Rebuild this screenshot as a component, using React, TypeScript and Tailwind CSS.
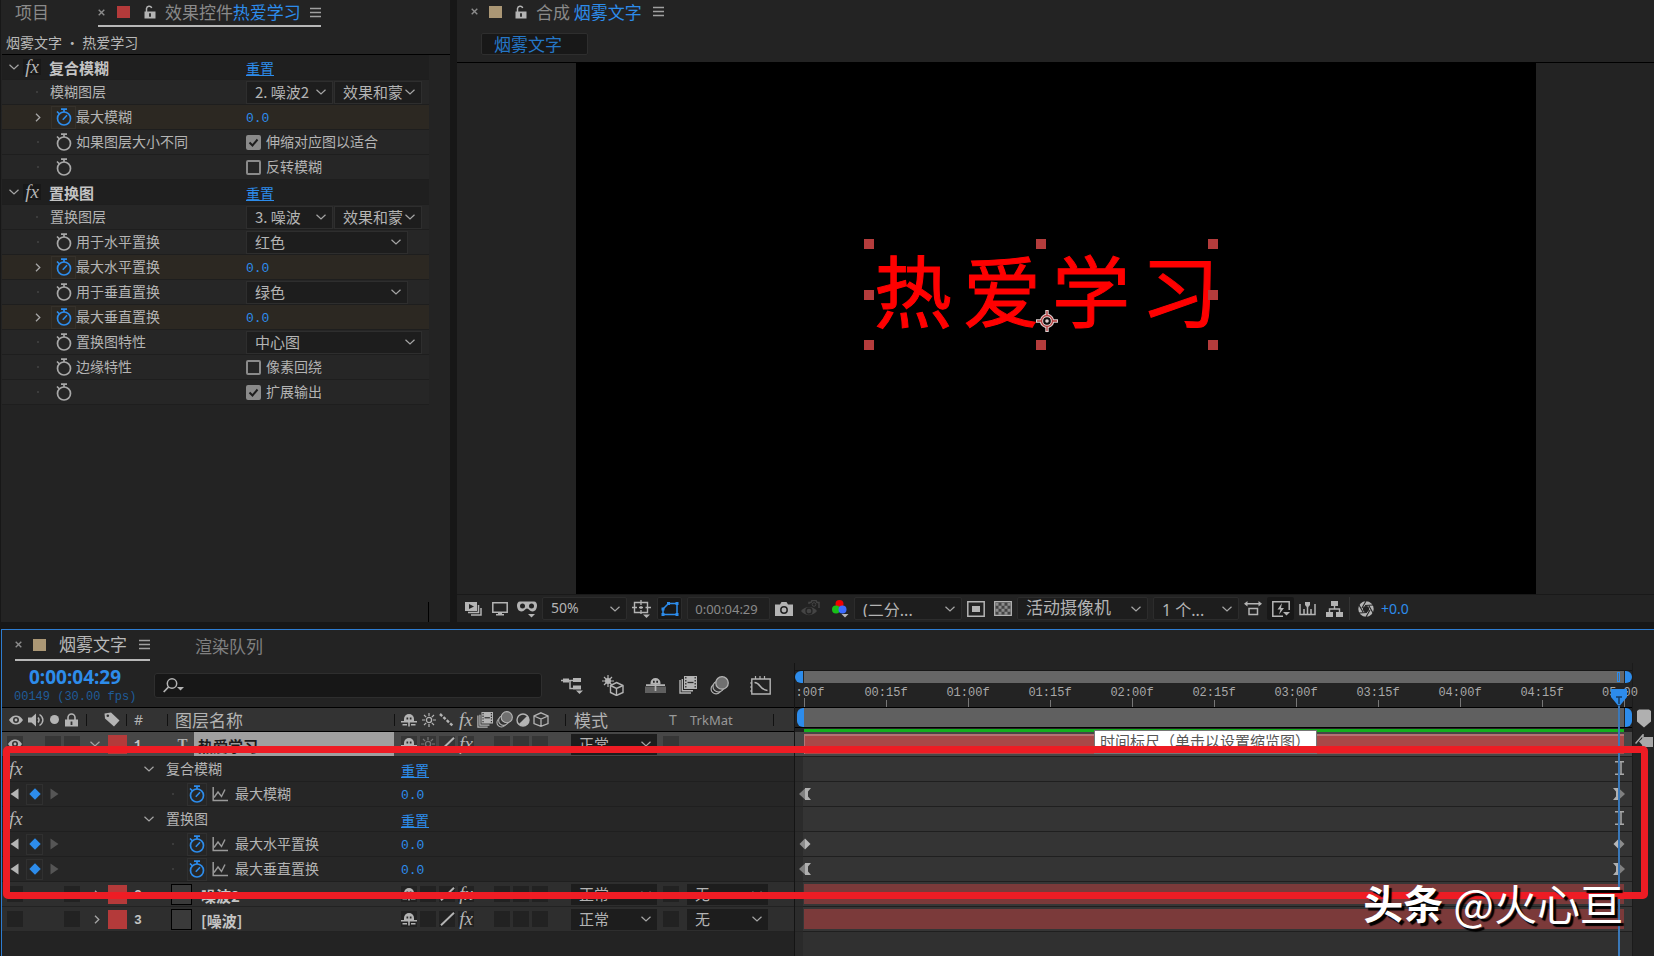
import type { ReactNode } from 'react';

const MONO = "font-['Liberation_Mono',monospace]";
const LATIN = "font-['Noto_Sans','Noto_Sans_CJK_SC',sans-serif]";

// ---------- icons ----------

type IconProps = { w: number; h: number; children: ReactNode; className?: string };

function Icon({ w, h, children, className = '' }: IconProps) {
  return (
    <svg width={w} height={h} viewBox={`0 0 ${w} ${h}`} fill="none" className={`shrink-0 ${className}`} aria-hidden="true">
      {children}
    </svg>
  );
}

const ChevronDown = ({ className = 'text-[#a6a6a6]' }: { className?: string }) => (
  <Icon w={10} h={6} className={className}>
    <path d="M.5.8 5 5 9.500.8" stroke="currentColor" strokeWidth="1.200" />
  </Icon>
);

const ChevronRight = () => (
  <Icon w={6} h={9} className="text-[#a6a6a6]">
    <path d="M1 .7 4.800 4.500 1 8.300" stroke="currentColor" strokeWidth="1.300" />
  </Icon>
);

const CloseX = () => (
  <Icon w={7} h={7} className="text-[#8c8c8c]">
    <path d="M.7.7l5.600 5.600M6.300.7.7 6.300" stroke="currentColor" strokeWidth="1.400" />
  </Icon>
);

const MenuLines = () => (
  <Icon w={11} h={11} className="text-[#a0a0a0]">
    <path d="M0 1.500h11M0 5.500h11M0 9.500h11" stroke="currentColor" strokeWidth="1.500" />
  </Icon>
);

const OpenLock = () => (
  <Icon w={12} h={14} className="text-[#b4b4b4]">
    <path d="M2.500 7V3.500A2.700 2.700 0 0 1 7.700 3" stroke="currentColor" strokeWidth="1.500" />
    <path d="M.5 6.500h11v7H.5z" fill="currentColor" />
    <path d="M6 8.200v3.600" stroke="#232323" strokeWidth="1.800" />
  </Icon>
);

const Stopwatch = ({ on = false }: { on?: boolean }) => (
  <Icon w={16} h={18} className={on ? 'text-[#2d8ceb]' : 'text-[#a8a8a8]'}>
    <circle cx="8" cy="10.500" r="6.500" stroke="currentColor" strokeWidth="1.700" />
    <path d="M5 1.200h6M8 1v3M1 3.500l2.500 2.500" stroke="currentColor" strokeWidth="1.700" />
    {on && <path d="M6.800 11.800 11 7.300" stroke="currentColor" strokeWidth="1.600" />}
  </Icon>
);

const FxGlyph = ({ className = '' }: { className?: string }) => (
  <span className={`font-['Liberation_Serif',serif] text-[19px] leading-4 italic text-[#b4b4b4] ${className}`}>fx</span>
);

const Eye = () => (
  <Icon w={14} h={10} className="text-[#b4b4b4]">
    <path d="M0 5C2 1.800 4.300.5 7 .5S12 1.800 14 5c-2 3.200-4.300 4.500-7 4.500S2 8.200 0 5z" fill="currentColor" />
    <circle cx="7" cy="5" r="3" fill="#333" />
    <circle cx="7" cy="5" r="1.400" fill="currentColor" />
  </Icon>
);

const Speaker = () => (
  <Icon w={17} h={14} className="text-[#b4b4b4]">
    <path d="M0 4.500h3.500L8 .5v13L3.500 9.500H0z" fill="currentColor" />
    <path d="M10 4.500c1.300 1.500 1.300 3.500 0 5M11.500 1.500c4.500 3 4.500 8 0 11" stroke="currentColor" strokeWidth="1.400" />
  </Icon>
);

const ClosedLock = () => (
  <Icon w={13} h={14} className="text-[#b4b4b4]">
    <path d="M3 7V4.500a3.500 3.500 0 0 1 7 0V7" stroke="currentColor" strokeWidth="1.600" />
    <path d="M0 6.500h13v7H0z" fill="currentColor" />
    <path d="M6.500 8.500V12" stroke="#333" strokeWidth="1.800" />
  </Icon>
);

const Tag = () => (
  <Icon w={16} h={15} className="text-[#b4b4b4]">
    <path d="M.5 1.500 7 .5l8.500 8L10 14.500l-9-8z" fill="currentColor" />
    <circle cx="3.800" cy="3.800" r="1.300" fill="#333" />
  </Icon>
);

const Shy = () => (
  <Icon w={16} h={14} className="text-[#b4b4b4]">
    <path d="M3 8.500V6a5 5 0 0 1 10 0v2.500z" fill="currentColor" />
    <path d="M0 8.800h16M1.500 11.800h4.500M10 11.800h4.500M8 7v6.500" stroke="currentColor" strokeWidth="1.600" />
    <path d="M5.500 4.500h1.700v2H5.500zM8.800 4.500h1.700v2H8.800z" fill="#2b2b2b" />
  </Icon>
);

const Sun = ({ dim = false }: { dim?: boolean }) => (
  <Icon w={14} h={14} className={dim ? 'text-[#777]' : 'text-[#b4b4b4]'}>
    <circle cx="7" cy="7" r="2.600" stroke="currentColor" strokeWidth="1.300" />
    <path d="M7 0v3M7 11v3M0 7h3M11 7h3M2 2l2.200 2.200M9.800 9.800 12 12M12 2 9.800 4.200M4.200 9.800 2 12" stroke="currentColor" strokeWidth="1.200" />
  </Icon>
);

const Stairs = () => (
  <Icon w={15} h={14} className="text-[#b4b4b4]">
    <path d="M1 1l13 12" stroke="currentColor" strokeWidth="2.400" strokeDasharray="3 1.600" />
  </Icon>
);

const Slash = () => (
  <Icon w={15} h={14} className="text-[#b4b4b4]">
    <path d="M1 13.300 14 .7" stroke="currentColor" strokeWidth="1.900" />
  </Icon>
);

const Film = ({ size = 16 }: { size?: number }) => (
  <svg width={size} height={size} viewBox="0 0 18 18" fill="none" className="shrink-0 text-[#b4b4b4]" aria-hidden="true">
    <path d="M1 4v13h11M3.300 3v11.700H14" stroke="currentColor" strokeWidth="1.400" />
    <path d="M5 0h13v13H5z" fill="currentColor" />
    <path d="M6.800 1v11M16.200 1v11" stroke="#2b2b2b" strokeWidth="1.300" strokeDasharray="1.500 1.500" />
    <path d="M8.500 6.500h6" stroke="#2b2b2b" strokeWidth="1.300" />
  </svg>
);

const MotionBlur = ({ size = 17 }: { size?: number }) => (
  <svg width={size} height={size} viewBox="0 0 18 18" fill="none" className="shrink-0 text-[#b4b4b4]" aria-hidden="true">
    <circle cx="5.800" cy="12.200" r="4.800" stroke="currentColor" strokeWidth="1.100" />
    <circle cx="8" cy="10" r="5.200" fill="#333" stroke="currentColor" strokeWidth="1.100" />
    <circle cx="11.400" cy="6.600" r="5.900" fill="#707070" stroke="currentColor" strokeWidth="1.200" />
  </svg>
);

const HalfCircle = () => (
  <Icon w={14} h={14} className="text-[#b4b4b4]">
    <circle cx="7" cy="7" r="6" stroke="currentColor" strokeWidth="1.400" />
    <path d="M11.300 2.700a6 6 0 1 1-8.600 8.600z" fill="currentColor" />
  </Icon>
);

const Cube = () => (
  <Icon w={16} h={15} className="text-[#b4b4b4]">
    <path d="M8 .8 15 4v7.500L8 14.300 1 11.500V4zM1 4l7 3 7-3M8 7v7" stroke="currentColor" strokeWidth="1.300" />
  </Icon>
);

const GraphIcon = () => (
  <Icon w={16} h={15} className="text-[#9a9a9a]">
    <path d="M1.200 0v13.500H16" stroke="currentColor" strokeWidth="1.500" />
    <path d="M2 10.500 6 5l3.500 4.500L13 2.500" stroke="currentColor" strokeWidth="1.400" />
  </Icon>
);

const TriDown = ({ x, y }: { x: number; y: number }) => <path d={`M${x} ${y}h7l-3.500 3.500z`} fill="currentColor" />;

// ---------- shared controls ----------

type SelectProps = { label: string; value: string; className: string };

function Select({ label, value, className }: SelectProps) {
  return (
    <div className={`relative flex shrink-0 items-center bg-[#1d1d1d] ${className}`}>
      <select aria-label={label} defaultValue={value} className="h-full w-full appearance-none bg-transparent pb-0.5 pl-2 text-[#b4b4b4] outline-none">
        <option>{value}</option>
      </select>
      <span className="pointer-events-none absolute right-1.5">
        <ChevronDown />
      </span>
    </div>
  );
}

function Tick({ label, checked }: { label: string; checked?: boolean }) {
  return (
    <label className="flex items-center gap-[5px]">
      <span className="relative flex h-[15px] w-[15px]">
        <input
          type="checkbox"
          defaultChecked={checked}
          className="peer h-[15px] w-[15px] appearance-none rounded-[2px] border-2 border-[#8a8a8a] checked:bg-[#8a8a8a]"
        />
        <svg viewBox="0 0 15 15" className="pointer-events-none absolute inset-0 hidden peer-checked:block" fill="none" aria-hidden="true">
          <path d="M3.500 7.500 6.500 10.500 11.500 4.500" stroke="#1d1d1d" strokeWidth="2" />
        </svg>
      </span>
      <span className="pb-0.5">{label}</span>
    </label>
  );
}

const Reset = () => <button className="pt-0.5 text-[#2d8ceb] underline underline-offset-1">重置</button>;

const Value = () => <button className={`pt-[3px] text-[13px] text-[#2d8ceb] ${MONO}`}>0.0</button>;

// ---------- effect controls ----------

type EffectRow = {
  group?: boolean;
  label?: string;
  watch?: 'off' | 'on';
  control: ReactNode;
};

const fieldBox = 'h-[23px] border border-[#2e2e2e] text-[15px]';

const effectRows: EffectRow[] = [
  { group: true, label: '复合模糊', control: <Reset /> },
  {
    label: '模糊图层',
    control: (
      <>
        <Select label="模糊图层" value="2. 噪波2" className={`${fieldBox} w-[87px]`} />
        <Select label="模糊图层来源" value="效果和蒙" className={`${fieldBox} w-[88px]`} />
      </>
    ),
  },
  { label: '最大模糊', watch: 'on', control: <Value /> },
  { label: '如果图层大小不同', watch: 'off', control: <Tick label="伸缩对应图以适合" checked /> },
  { label: '', watch: 'off', control: <Tick label="反转模糊" /> },
  { group: true, label: '置换图', control: <Reset /> },
  {
    label: '置换图层',
    control: (
      <>
        <Select label="置换图层" value="3. 噪波" className={`${fieldBox} w-[87px]`} />
        <Select label="置换图层来源" value="效果和蒙" className={`${fieldBox} w-[88px]`} />
      </>
    ),
  },
  { label: '用于水平置换', watch: 'off', control: <Select label="用于水平置换" value="红色" className={`${fieldBox} w-[162px]`} /> },
  { label: '最大水平置换', watch: 'on', control: <Value /> },
  { label: '用于垂直置换', watch: 'off', control: <Select label="用于垂直置换" value="绿色" className={`${fieldBox} w-[162px]`} /> },
  { label: '最大垂直置换', watch: 'on', control: <Value /> },
  { label: '置换图特性', watch: 'off', control: <Select label="置换图特性" value="中心图" className={`${fieldBox} w-[176px]`} /> },
  { label: '边缘特性', watch: 'off', control: <Tick label="像素回绕" /> },
  { label: '', watch: 'off', control: <Tick label="扩展输出" checked /> },
];

function EffectLine({ row }: { row: EffectRow }) {
  const bg = row.group ? 'bg-[#1f1f1f]' : row.watch === 'on' ? 'bg-[#2c2822]' : 'bg-[#262626]';
  return (
    <div className={`flex h-[25px] items-center border-b border-[#1e1e1e] ${bg}`}>
      <div className="flex w-[244px] items-center">
        {row.group ? (
          <>
            <button aria-label="折叠" className="flex w-[21px] justify-center pl-0.5"><ChevronDown /></button>
            <span className="flex w-[18px] justify-center bg-[#181818]"><FxGlyph /></span>
            <span className="pl-2 pt-0.5 text-[15px] font-bold text-[#c4c4c4]">{row.label}</span>
          </>
        ) : (
          <>
            <span className={`flex justify-center pl-[22px] ${row.watch ? 'w-[49px]' : 'w-[48px]'}`}>
              {row.watch === 'on' ? <ChevronRight /> : <span className="h-0.5 w-0.5 bg-[#3c3c3c]" />}
            </span>
            {row.watch && (
              <button
                aria-label="关键帧"
                className={`flex h-[23px] w-[25px] items-center justify-center ${row.watch === 'on' ? 'border border-[#35312b]' : ''}`}
              >
                <Stopwatch on={row.watch === 'on'} />
              </button>
            )}
            <span className="pb-0.5">{row.label}</span>
          </>
        )}
      </div>
      <div className="flex items-center gap-px">{row.control}</div>
    </div>
  );
}

function EffectControls() {
  return (
    <section className="flex w-[451px] shrink-0 flex-col border-x border-[#171717] bg-[#232323] pl-px">
      <header className="flex h-[27px] text-[17px] leading-6 text-[#8a8a8a]">
        <button className="ml-[13px] h-6">项目</button>
        <div className="ml-[49px] flex items-center border-b-2 border-[#b8b8b8] pb-px">
          <CloseX />
          <span className="ml-3 h-3 w-[13px] bg-[#b43a3a]" />
          <button aria-label="锁定" className="ml-3.5 mr-[9px]"><OpenLock /></button>
          <span>效果控件 <span className="-ml-1 text-[#2d8ceb]">热爱学习</span></span>
          <button aria-label="面板菜单" className="ml-[9px]"><MenuLines /></button>
        </div>
      </header>
      <p className="flex h-[28px] items-center border-b border-black pl-1 pt-0.5 text-[#b8b8b8]">烟雾文字 • 热爱学习</p>
      <div className="mr-[21px]">
        {effectRows.map((row, i) => (
          <EffectLine key={i} row={row} />
        ))}
      </div>
      <div className="mr-[21px] mt-auto h-[20px] border-r border-black" />
    </section>
  );
}

// ---------- composition viewer ----------

const handle = 'h-2.5 w-2.5 bg-[#b43c3c]';

function Stage() {
  return (
    <div className="flex h-[531px] pl-[119px] pr-[118px]">
      <div className="relative flex-1 bg-black">
        <div className="absolute left-[30%] top-[176px] h-[111px] w-[354px]">
          <div className="flex h-full items-center gap-[11px] pb-3.5 pl-2.5 text-[78px] leading-none text-[#ff0000] [-webkit-text-stroke:1px_#ff0000]">
            {'热爱学习'.split('').map((ch) => (
              <span key={ch}>{ch}</span>
            ))}
          </div>
          <div className="absolute inset-0 flex flex-col justify-between">
            <div className="flex justify-between"><i className={handle} /><i className={handle} /><i className={handle} /></div>
            <div className="flex justify-between"><i className={handle} /><i className={handle} /></div>
            <div className="flex justify-between"><i className={handle} /><i className={handle} /><i className={handle} /></div>
          </div>
          <Icon w={22} h={22} className="absolute left-[172px] top-[71px]">
            <g stroke="#e0d0d0" strokeWidth="3.400">
              <circle cx="11" cy="11" r="5.500" />
              <path d="M11 0v6M11 16v6M0 11h6M16 11h6" />
            </g>
            <g stroke="#b43c3c" strokeWidth="1.300">
              <circle cx="11" cy="11" r="5.500" />
              <path d="M11 1v5M11 16v5M1 11h5M16 11h5" />
            </g>
            <circle cx="11" cy="11" r="3" fill="#111" />
            <circle cx="11" cy="11" r="1.800" fill="#e0d0d0" />
          </Icon>
        </div>
      </div>
    </div>
  );
}

const viewBox = 'h-[23px] rounded-[2px] border border-[#2c2c2c]';

function ViewerToolbar() {
  return (
    <footer className={`flex h-[28px] items-center gap-[5px] border-t border-[#191919] pl-2 text-[#b4b4b4] ${LATIN}`}>
      <button aria-label="始终预览此视图" className="w-[22px]">
        <Icon w={17} h={14}>
          <path d="M0 0h12v9H0z" fill="currentColor" />
          <path d="M4 2l5 2.500L4 7z" fill="#232323" />
          <path d="M3 10.500h10.500V3M6 13h10V6" stroke="currentColor" strokeWidth="1.500" />
        </Icon>
      </button>
      <button aria-label="主查看器" className="w-5">
        <Icon w={16} h={14}>
          <path d="M.8.8h14.400v9.400H.8z" stroke="currentColor" strokeWidth="1.500" />
          <path d="M6 10h4v2h2v1.500H4V12h2z" fill="currentColor" />
        </Icon>
      </button>
      <button aria-label="VR 视图" className="w-5">
        <Icon w={20} h={18}>
          <path d="M3 1.500h14c2 0 3 2 3 4s-1 6-4.500 6c-3 0-3.500-3-5.500-3s-2.500 3-5.500 3C1 11.500 0 7.500 0 5.500s1-4 3-4z" fill="currentColor" />
          <circle cx="5.500" cy="6" r="2.500" fill="#232323" />
          <circle cx="14.500" cy="6" r="2.500" fill="#232323" />
          <TriDown x={11} y={14} />
        </Icon>
      </button>
      <Select label="放大率" value="50%" className={`${viewBox} w-[85px] text-sm`} />
      <button aria-label="网格和参考线" className="w-5">
        <Icon w={19} h={18}>
          <path d="M2.500 2.500h13v10h-13z" stroke="currentColor" strokeWidth="1.400" />
          <path d="M9 0v5M9 10v4M0 7.500h5M13.500 7.500H19M7 7.500h4M9 6v3" stroke="currentColor" strokeWidth="1.300" />
          <TriDown x={11} y={14.5} />
        </Icon>
      </button>
      <button aria-label="切换蒙版" className={`${viewBox} flex w-[25px] items-center justify-center bg-[#181818] text-[#2d8ceb]`}>
        <Icon w={18} h={16}>
          <path d="M2 13.500V8l5.500-5.500H16v11z" stroke="currentColor" strokeWidth="1.500" />
          <path d="M.5 12h3v3h-3zM14.500 12h3v3h-3zM14.500 1h3v3h-3zM6 1h3v3H6zM.5 6.500h3v3h-3z" fill="currentColor" />
        </Icon>
      </button>
      <button className={`${viewBox} w-[83px] bg-[#1f1f1f] pr-1 text-[13px] text-[#8a8a8a]`}>0:00:04:29</button>
      <button aria-label="拍摄快照" className="w-[21px]">
        <Icon w={18} h={14}>
          <path d="M0 2.500h5L6.500 0h5L13 2.500h5V14H0z" fill="currentColor" />
          <circle cx="9" cy="8" r="3.200" stroke="#232323" strokeWidth="1.500" />
        </Icon>
      </button>
      <button aria-label="显示快照" className="w-[26px] text-[#444]">
        <Icon w={19} h={17}>
          <path d="M0 11c4-5.500 12-5.500 16 0-4 5.500-12 5.500-16 0z" fill="currentColor" />
          <circle cx="8" cy="11" r="3" stroke="#232323" strokeWidth="1.300" />
          <path d="M8 4V2.500h2L11 .5h4l1 2h2V8" stroke="currentColor" strokeWidth="1.500" />
          <circle cx="13" cy="4.500" r="1.800" stroke="currentColor" />
        </Icon>
      </button>
      <button aria-label="通道" className="w-[17px]">
        <Icon w={17} h={19}>
          <circle cx="7.500" cy="5" r="4" fill="#f00000" />
          <circle cx="4" cy="10.500" r="4" fill="#18c018" />
          <circle cx="10.500" cy="10.500" r="4" fill="#3d6bff" />
          <TriDown x={9.500} y={15} />
        </Icon>
      </button>
      <Select label="分辨率" value="(二分..." className={`${viewBox} w-[108px] text-base`} />
      <button aria-label="目标区域" className="w-[22px]">
        <Icon w={18} h={16}>
          <path d="M.8.8h16.400v14.400H.8z" stroke="currentColor" strokeWidth="1.500" />
          <path d="M5 5h8v6H5z" fill="currentColor" />
        </Icon>
      </button>
      <button aria-label="透明网格" className="w-[18px]">
        <Icon w={18} h={15}>
          <path d="M.7.7h16.600v13.600H.7z" fill="#444" stroke="currentColor" strokeWidth="1.300" />
          <path d="M1.500 3.200h15M1.500 9.200h15" stroke="#8c8c8c" strokeWidth="3" strokeDasharray="3 3" />
          <path d="M4.500 6.200h12M4.500 12.200h12" stroke="#8c8c8c" strokeWidth="3" strokeDasharray="3 3" />
        </Icon>
      </button>
      <Select label="3D 视图" value="活动摄像机" className={`${viewBox} w-[131px] text-[17px]`} />
      <Select label="视图布局" value="1 个..." className={`${viewBox} w-[86px] text-base`} />
      <button aria-label="像素长宽比校正" className="w-[18px]">
        <Icon w={18} h={15}>
          <path d="M2 2.700h14M5 7.500h8.500v6H5z" stroke="currentColor" strokeWidth="1.500" />
          <path d="M0 2.700 3.500 0v5.400zM18 2.700 14.500 0v5.400z" fill="currentColor" />
        </Icon>
      </button>
      <button aria-label="快速预览" className="flex h-[23px] w-[27px] items-center justify-center rounded-[2px] bg-[#181818]">
        <Icon w={18} h={16}>
          <path d="M17.200 9V.8H.8v14.400H11" stroke="currentColor" strokeWidth="1.500" />
          <path d="M10 2 5.500 8.500h3L7 13.500l5-6.500H9z" fill="currentColor" />
          <TriDown x={11} y={11} />
        </Icon>
      </button>
      <button aria-label="时间轴" className="w-[22px]">
        <Icon w={17} h={14}>
          <path d="M1 2v10.500h15V2M5 12V7M8.500 12V5M12 12V7" stroke="currentColor" strokeWidth="1.500" />
          <path d="M6 0h5v3L8.500 6 6 3z" fill="currentColor" />
        </Icon>
      </button>
      <button aria-label="合成流程图" className="w-[18px]">
        <Icon w={17} h={16}>
          <path d="M5 0h7v5H5zM0 11h7v5H0zM10 11h7v5h-7z" fill="currentColor" />
          <path d="M8.500 5v3M3.500 11V8h10v3" stroke="currentColor" strokeWidth="1.400" />
        </Icon>
      </button>
      <span className="h-[23px] w-px bg-[#333]" />
      <button aria-label="重置曝光度" className="w-[21px] pl-[3px]">
        <Icon w={16} h={16}>
          <circle cx="8" cy="8" r="5.400" stroke="currentColor" strokeWidth="4.600" />
          <path d="M8 0 4 7M15 4l-8 .5M15 12l-4-7M8 16l4-7M1 12l8-.5M1 4l4 7" stroke="#232323" strokeWidth="1.100" />
        </Icon>
      </button>
      <button className="text-sm text-[#2d8ceb]">+0.0</button>
    </footer>
  );
}

function Viewer() {
  return (
    <section className="flex min-w-0 flex-1 flex-col bg-[#232323]">
      <header className="flex h-[27px] items-center pb-1 pl-[14px] text-[17px] text-[#8a8a8a]">
        <CloseX />
        <span className="ml-[11px] h-3 w-[13px] bg-[#ab9775]" />
        <button aria-label="锁定" className="ml-[13px] mr-[9px]"><OpenLock /></button>
        <span>合成 <span className="text-[#2d8ceb]">烟雾文字</span></span>
        <button aria-label="面板菜单" className="ml-[11px]"><MenuLines /></button>
      </header>
      <div className="h-9 border-b border-black pl-6 pt-1.5">
        <button className="h-[22px] w-[107px] rounded-[2px] border border-[#2e2e2e] bg-[#181818] pb-0.5 pl-3 text-left text-[17px] leading-none text-[#2577c8]">
          烟雾文字
        </button>
      </div>
      <Stage />
      <ViewerToolbar />
    </section>
  );
}

// ---------- timeline ----------

const columns = 'grid grid-cols-[85px_40px_41px_227px_171px_minmax(0,1fr)]';

type Layer = { kind: 'layer'; index: number; name: string; text?: boolean; selected?: boolean };
type Group = { kind: 'group'; name: string };
type Prop = { kind: 'prop'; name: string; ease: boolean };
type Line = Layer | Group | Prop;

const lines: Line[] = [
  { kind: 'layer', index: 1, name: '热爱学习', text: true, selected: true },
  { kind: 'group', name: '复合模糊' },
  { kind: 'prop', name: '最大模糊', ease: true },
  { kind: 'group', name: '置换图' },
  { kind: 'prop', name: '最大水平置换', ease: false },
  { kind: 'prop', name: '最大垂直置换', ease: true },
  { kind: 'layer', index: 2, name: '噪波2' },
  { kind: 'layer', index: 3, name: '[噪波]' },
];

// the outermost labels are shortened to stay inside the ruler
const ticks = [':00f', '00:15f', '01:00f', '01:15f', '02:00f', '02:15f', '03:00f', '03:15f', '04:00f', '04:15f', '05:00'];

// current frame 149 of 150
const playhead = `${(149 / 150) * 100}%`;

function LayerLine({ layer }: { layer: Layer }) {
  const cell = `flex h-4 w-4 shrink-0 items-center justify-center ${layer.selected ? 'bg-[#363636]' : 'bg-[#222]'}`;
  return (
    <div className={`${columns} h-[25px] border-b border-[#222] ${layer.selected ? 'bg-[#474747]' : 'bg-[#2e2e2e]'}`}>
      <div className="flex items-center gap-[3px] pl-[5px]">
        <button aria-label="视频" className={cell}>{layer.selected && <Eye />}</button>
        <span className="w-4" />
        <button aria-label="独奏" className={layer.selected ? cell : 'w-4'} />
        <button aria-label="锁定" className={cell} />
      </div>
      <div className="flex items-center justify-end gap-2">
        <button aria-label="展开">{layer.selected ? <ChevronDown /> : <ChevronRight />}</button>
        <span className="h-[19px] w-[19px] bg-[#b43a3a]" />
      </div>
      <div className={`self-center pl-[7px] pt-[3px] text-[13px] font-bold text-[#c4c4c4] ${MONO}`}>{layer.index}</div>
      <div className="flex items-center pl-[3px]">
        {layer.text ? (
          <span className="w-[23px] text-center font-['Liberation_Serif',serif] text-[15px] font-bold text-[#b4b4b4]">T</span>
        ) : (
          <span className="mr-0.5 h-[21px] w-[21px] border border-black bg-[#3a3a3a]" />
        )}
        <span
          className={`flex h-full flex-1 items-center pt-[3px] text-[15px] font-bold ${layer.selected ? 'mr-px bg-[#a0a0a0] pl-1 text-[#1b1b1b]' : 'pl-[7px] text-[#c4c4c4]'}`}
        >
          {layer.name}
        </span>
      </div>
      <div className="flex items-center gap-[3px] pl-1.5">
        <button aria-label="消隐" className={cell}><Shy /></button>
        <button aria-label="折叠变换" className={cell}>{layer.selected && <Sun dim />}</button>
        <button aria-label="质量" className={cell}><Slash /></button>
        <button aria-label="效果" className={cell}><FxGlyph /></button>
        <button aria-label="帧混合" className={`${cell} ml-[17px]`} />
        <button aria-label="运动模糊" className={cell} />
        <button aria-label="调整图层" className={cell} />
      </div>
      <div className="flex items-center pl-[5px] text-[15px]">
        <Select label="模式" value="正常" className="h-[21px] w-[86px]" />
        <button aria-label="保留透明度" className={`${cell} mx-1.5`} />
        {!layer.selected && <Select label="轨道遮罩" value="无" className="ml-0.5 h-[21px] w-[81px]" />}
      </div>
    </div>
  );
}

function GroupLine({ group }: { group: Group }) {
  return (
    <div className="flex h-[25px] items-center border-b border-[#1f1f1f] bg-[#262626]">
      <FxGlyph className="w-[142px] pl-[7px]" />
      <button aria-label="折叠"><ChevronDown /></button>
      <span className="w-[247px] pb-0.5 pl-3">{group.name}</span>
      <Reset />
    </div>
  );
}

function PropLine({ prop }: { prop: Prop }) {
  return (
    <div className="flex h-[25px] items-center border-b border-[#1f1f1f] bg-[#262626]">
      <div className="flex w-[170px] items-center gap-[7px] pl-2">
        <button aria-label="上一个关键帧"><Icon w={9} h={12}><path d="M8.500.5v11L.5 6z" fill="#b4b4b4" /></Icon></button>
        <button aria-label="关键帧" className="flex h-[21px] w-[17px] items-center justify-center border border-[#303030]">
          <Icon w={12} h={12}><path d="M6 .3 11.700 6 6 11.700.3 6z" fill="#2d8ceb" /></Icon>
        </button>
        <button aria-label="下一个关键帧"><Icon w={9} h={12}><path d="M.5.5v11l8-5.500z" fill="#555" /></Icon></button>
      </div>
      <span className="mr-[13px] h-0.5 w-0.5 bg-[#3c3c3c]" />
      <button aria-label="秒表" className="flex h-[23px] w-[20px] items-center justify-center border border-[#303030]"><Stopwatch on /></button>
      <button aria-label="图表" className="ml-[5px]"><GraphIcon /></button>
      <span className="w-[173px] pb-0.5 pl-[7px]">{prop.name}</span>
      <Value />
    </div>
  );
}

function Keyframe({ ease, end }: { ease: boolean; end?: boolean }) {
  return (
    <svg width="12" height="12" viewBox="0 0 12 12" className={end ? '' : 'rotate-180'} aria-hidden="true">
      {ease ? (
        <>
          <path d="M0 0h6v12H0l3-3.500v-5z" fill="#b0b0b0" />
          <path d="M6 .5 12 6l-6 5.500z" fill="#808080" />
        </>
      ) : (
        <>
          <path d="M6 .5v11L.5 6z" fill="#b8b8b8" />
          <path d="M6 .5 11.500 6 6 11.500z" fill="#8c8c8c" />
        </>
      )}
    </svg>
  );
}

function Track({ line }: { line: Line }) {
  if (line.kind === 'layer') {
    return (
      <div className={`flex h-[25px] items-center border-b border-[#1f1f1f] pl-[9px] pr-2 ${line.selected ? 'bg-[#474747]' : 'bg-[#363636]'}`}>
        <div className={`h-5 flex-1 ${line.selected ? 'border-l border-t-2 border-[#b57373] bg-[#a94848]' : 'bg-[#7b3a3a]'}`} />
      </div>
    );
  }
  return (
    <div className="h-[25px] border-b border-[#1f1f1f] bg-[#343434] pl-[9px] pr-2">
      <div className="relative h-full">
        {line.kind === 'prop' && (
          <>
            <span className="absolute -left-[5px] top-1.5 z-10"><Keyframe ease={line.ease} /></span>
            <span className="absolute top-1.5 -translate-x-1/2" style={{ left: playhead }}><Keyframe ease={line.ease} end /></span>
          </>
        )}
        {line.kind === 'group' && (
          <Icon w={9} h={14} className="absolute right-0 top-1">
            <path d="M0 .8h9M0 13.200h9M6 1v12" stroke="#a8a8a8" strokeWidth="1.500" />
          </Icon>
        )}
      </div>
    </div>
  );
}

const Sep = () => <span className="absolute right-0 top-1.5 h-3 w-px bg-[#111]" />;

function ColumnHeader() {
  return (
    <div className={`${columns} h-[25px] border-y border-black bg-[#333] text-[#b4b4b4]`}>
      <div className="relative flex items-center gap-[5px] pl-[7px]">
        <Eye />
        <Speaker />
        <span className="h-[9px] w-[9px] rounded-full bg-[#b4b4b4]" />
        <span className="pl-px"><ClosedLock /></span>
        <Sep />
      </div>
      <div className="relative flex items-center pl-[17px]"><Tag /><Sep /></div>
      <div className={`relative flex items-center pl-[7px] text-sm ${LATIN}`}>#<Sep /></div>
      <div className="relative flex items-center pl-[7px] text-[17px] leading-5">图层名称<Sep /></div>
      <div className="relative flex items-center gap-[3px] pl-1.5">
        <Shy />
        <span className="w-[15px] pl-0.5"><Sun /></span>
        <span className="pl-px"><Stairs /></span>
        <FxGlyph className="w-[17px] pl-0.5" />
        <Film />
        <MotionBlur />
        <HalfCircle />
        <Cube />
        <Sep />
      </div>
      <div className="relative mr-5 flex items-center pl-2">
        <span className="w-[95px] text-[17px] leading-5">模式</span>
        <span className={`w-[21px] text-sm text-[#999] ${LATIN}`}>T</span>
        <span className={`text-[13px] text-[#999] ${LATIN}`}>TrkMat</span>
        <Sep />
      </div>
    </div>
  );
}

function TimelineTools() {
  return (
    <div className="flex h-11 items-center">
      <div className="w-[152px] pl-3">
        <button className={`block pl-[15px] text-[19px] font-bold leading-6 text-[#2d8ceb] ${LATIN}`}>0:00:04:29</button>
        <p className={`text-[12px] leading-4 text-[#1f5c9a] ${MONO}`}>00149 (30.00 fps)</p>
      </div>
      <div className="flex h-[25px] w-[388px] items-center rounded-[3px] border border-[#2e2e2e] bg-[#171717] pl-2">
        <Icon w={22} h={15} className="text-[#b4b4b4]">
          <circle cx="9" cy="5.500" r="4.700" stroke="currentColor" strokeWidth="1.500" />
          <path d="M5.500 9 .7 14" stroke="currentColor" strokeWidth="1.800" />
          <TriDown x={14} y={9} />
        </Icon>
        <input aria-label="搜索图层" className="min-w-0 flex-1 bg-transparent pl-1 text-[#b4b4b4] outline-none" />
      </div>
      <div className="ml-[19px] flex flex-1 items-center gap-[13px] text-[#b4b4b4]">
        <button aria-label="合成微型流程图">
          <Icon w={22} h={17}>
            <path d="M0 3.500h12M9 3.500v8h3" stroke="currentColor" strokeWidth="1.500" />
            <path d="M2 1.500h6v4H2zM12 1h8v4h-8zM12 8.500h8v4h-8z" fill="currentColor" />
            <TriDown x={15} y={13.5} />
          </Icon>
        </button>
        <button aria-label="草图 3D" className="ml-1.5">
          <Icon w={22} h={21}>
            <circle cx="6" cy="6" r="3" fill="currentColor" />
            <path d="M6 0v12M0 6h12M2 2l8 8M10 2l-8 8" stroke="currentColor" strokeWidth="1.200" />
            <path d="M14.500 7.500 21 10.500v7L14.500 20.500 8.500 17.500v-7z" fill="#232323" stroke="currentColor" strokeWidth="1.400" />
            <path d="M8.500 10.500l6 3 6.500-3M14.500 13.500v7" stroke="currentColor" strokeWidth="1.400" />
          </Icon>
        </button>
        <button aria-label="隐藏消隐图层" className="ml-2">
          <Icon w={21} h={16}>
            <path d="M0 9.500h21V16H0z" fill="#606060" />
            <path d="M5.500 7.500V6a5 5 0 0 1 10 0v1.500z" fill="currentColor" />
            <path d="M1 8.200h19M10.500 7v7" stroke="currentColor" strokeWidth="1.700" />
            <path d="M8 3.800h1.700v2H8zM11.300 3.800H13v2h-1.700z" fill="#232323" />
          </Icon>
        </button>
        <button aria-label="帧混合"><Film size={18} /></button>
        <button aria-label="运动模糊"><MotionBlur size={19} /></button>
        <button aria-label="图表编辑器" className="ml-2">
          <Icon w={21} h={19}>
            <path d="M1.800 3h18.400v15H1.800z" stroke="currentColor" strokeWidth="1.400" />
            <path d="M5.500 0v3M10 0v3M14.500 0v3M0 7h2M0 11h2M0 15h2" stroke="currentColor" strokeWidth="1.200" />
            <path d="M4.500 6.500c6 0 5 7.500 13 8" stroke="currentColor" strokeWidth="1.500" />
          </Icon>
        </button>
      </div>
    </div>
  );
}

function Ruler() {
  return (
    <div className="h-[69px] pt-[7px]">
      <div className="flex h-[13px] border-t border-[#161616]">
        <span className="w-2 rounded-l-full bg-[#2d8ceb]" />
        <span className="ml-px flex-1 bg-[#666]" />
        <span className="ml-px w-[7px] rounded-r-full bg-[#2d8ceb]" />
      </div>
      <div className="flex h-6 justify-between pl-[9px] pr-2">
        {ticks.map((t, i) => (
          <div key={t} className="flex w-0 flex-col items-center">
            <span
              className={`h-[15px] pt-0.5 text-[12px] leading-4 text-[#a8a8a8] ${MONO} ${i === 0 ? 'pl-3' : ''} ${i === 10 ? 'pr-2' : ''}`}
            >
              {t}
            </span>
            <span className={`mt-auto w-px bg-[#777] ${i % 2 ? 'h-[7px]' : 'h-[9px]'}`} />
          </div>
        ))}
      </div>
      <div className="flex h-[21px] border-y border-black">
        <span className="ml-0.5 w-[7px] rounded-l-md bg-[#2d8ceb]" />
        <span className="flex-1 bg-[#606060]" />
        <span className="ml-px w-[7px] rounded-r-md bg-[#2d8ceb]" />
      </div>
      <div className="ml-[9px] mr-2 mt-px h-[3px] bg-[#14b01e]" />
    </div>
  );
}

function Timeline() {
  return (
    <section className="relative ml-px flex min-h-0 flex-1 flex-col border-l border-t border-[#2d7cd0] bg-[#232323]">
      <header className="flex h-[33px] text-[17px] leading-8">
        <div className="ml-[13px] flex h-[31px] items-center border-b-2 border-[#b8b8b8] text-[#b8b8b8]">
          <CloseX />
          <span className="ml-[11px] h-3 w-[13px] bg-[#ab9775]" />
          <span className="ml-[13px] pb-0.5">烟雾文字</span>
          <button aria-label="面板菜单" className="ml-3"><MenuLines /></button>
        </div>
        <button className="ml-[45px] h-[30px] leading-none text-[#808080]">渲染队列</button>
      </header>

      <div className="flex min-h-0 flex-1">
        <div className="w-[792px] shrink-0">
          <TimelineTools />
          <ColumnHeader />
          {lines.map((line, i) => {
            if (line.kind === 'layer') return <LayerLine key={i} layer={line} />;
            if (line.kind === 'group') return <GroupLine key={i} group={line} />;
            return <PropLine key={i} prop={line} />;
          })}
        </div>

        <div className="relative flex min-w-0 flex-1 flex-col border-l border-[#141414]">
          <Ruler />
          <div className="flex flex-1 flex-col bg-[#303030]">
            {lines.map((line, i) => (
              <Track key={i} line={line} />
            ))}
          </div>
          <span className="absolute bottom-0 left-0 top-[94px] w-2 bg-[#282828]/70" />
          <div className="pointer-events-none absolute bottom-0 left-[9px] right-2 top-[7px]">
            <div className="absolute bottom-0 top-0 flex w-4 -translate-x-1/2 flex-col items-center" style={{ left: playhead }}>
              <span className="mt-0.5 h-2.5 w-[3px] border border-[#2d8ceb]" />
              <Icon w={16} h={17} className="mt-[7px]">
                <path d="M0 0h16v8l-7 8.500H7L0 8z" fill="#2d8ceb" />
                <path d="M5 8h6M8 8v7" stroke="#173c63" strokeWidth="1.500" />
              </Icon>
              <span className="w-0.5 flex-1 bg-[#3a78b8]" />
            </div>
          </div>
          <div className="absolute left-[299px] top-[67px] h-6 w-[223px] border border-[#767676] bg-white pl-[5px] text-[15px] leading-5 text-[#575757]">
            时间标尺（单击以设置缩览图）
          </div>
        </div>

        <aside className="flex w-[22px] shrink-0 flex-col items-center border-l border-[#1b1b1b] pt-[46px]">
          <button aria-label="合成标记">
            <Icon w={14} h={19}><path d="M0 2l2-1.500h10L14 2v10.500L7 18.500 0 12.500z" fill="#b0b0b0" /></Icon>
          </button>
          <button aria-label="合成按钮" className="mt-1.5">
            <Icon w={18} h={14}>
              <path d="M.5 9.500 8 .8v12" stroke="#a8a8a8" strokeWidth="1.500" />
              <path d="M4 7.500 9 3h9v10H9z" fill="#a8a8a8" />
            </Icon>
          </button>
        </aside>
      </div>

      <div className="pointer-events-none absolute left-px right-[6px] top-[116px] z-20 h-[153px] rounded-[5px] border-[7px] border-[#ee1c24]" />
      <div className="absolute bottom-[26px] right-[31px] z-20 flex items-center gap-2.5 text-[43px] leading-[56px] text-white [text-shadow:3px_3px_1px_#000]">
        <span className="text-[40px] font-bold">头条</span>
        <span>@火心亘</span>
      </div>
    </section>
  );
}

export default function App() {
  return (
    <div className="flex h-screen min-h-[940px] flex-col overflow-hidden bg-[#171717] font-['Noto_Sans_CJK_SC',sans-serif] text-sm leading-5 text-[#b4b4b4]">
      <div className="mb-[7px] flex shrink-0 gap-1.5">
        <EffectControls />
        <Viewer />
      </div>
      <Timeline />
    </div>
  );
}
